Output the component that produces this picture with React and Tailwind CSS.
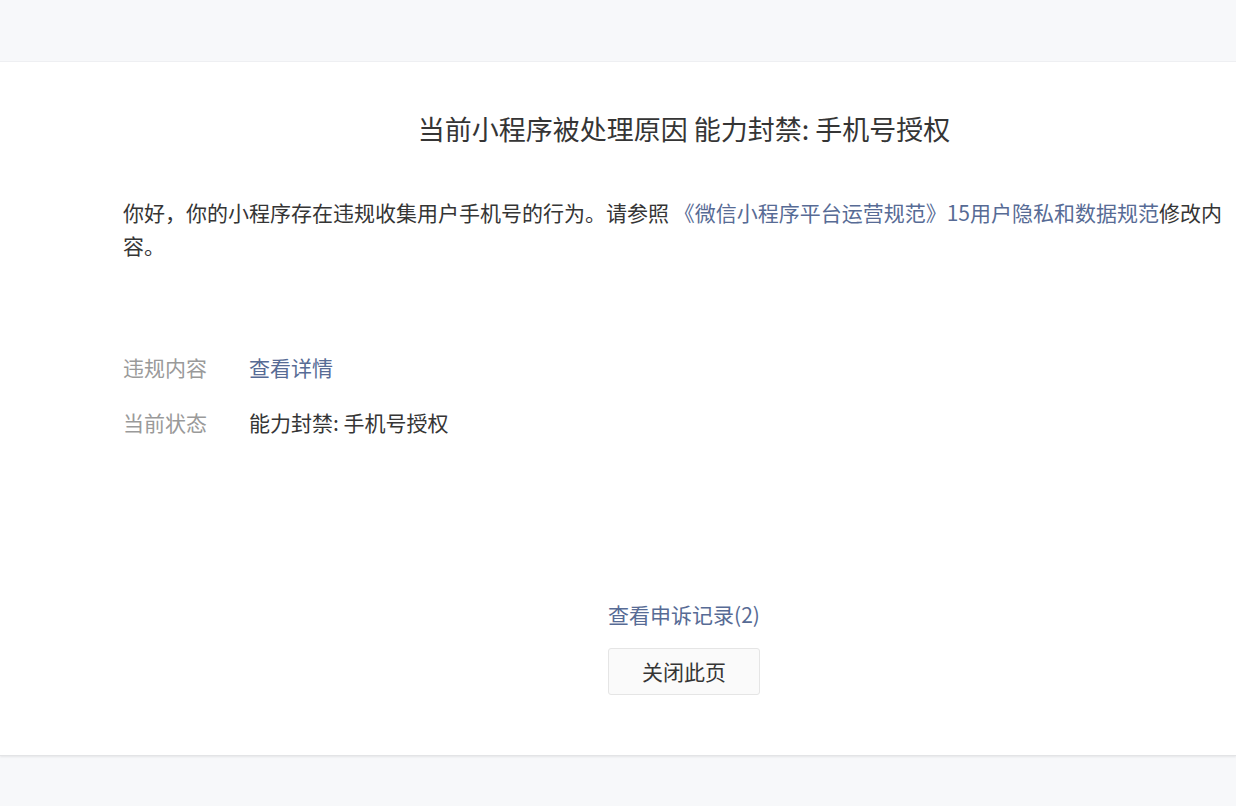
import React from "react";

const font = { fontFamily: '"Microsoft YaHei", "Noto Sans CJK SC", "Noto Sans", sans-serif' };

const App = () => {
  return (
    <div className="min-h-screen bg-[#f7f8fa] text-[#353535]" style={font}>
      <div className="h-[62px] border-b border-[#eff0f3]" />
      <div className="bg-white h-[694px] shadow-[0_1px_2px_rgba(0,0,0,0.08)] border-b border-[#e3e4e6]">
        <div className="w-[1122px] ml-[123px] pt-[47px]">
          <h1 className="text-center text-[27px] leading-[40px] font-normal">
            当前小程序被处理原因 能力封禁: 手机号授权
          </h1>
          <p className="mt-[47px] text-[21px] leading-[33px]">
            你好，你的小程序存在违规收集用户手机号的行为。请参照{" "}
            <a className="text-[#576b95]">《微信小程序平台运营规范》15用户隐私和数据规范</a>
            修改内容。
          </p>
          <div className="mt-[89px] flex flex-col gap-[22px] text-[21px] leading-[33px]">
            <div className="flex">
              <span className="w-[126px] text-[#9a9a9a]">违规内容</span>
              <a className="text-[#576b95]">查看详情</a>
            </div>
            <div className="flex">
              <span className="w-[126px] text-[#9a9a9a]">当前状态</span>
              <span>能力封禁: 手机号授权</span>
            </div>
          </div>
          <div className="mt-[159px] flex flex-col items-center">
            <a className="text-[21px] leading-[33px] text-[#576b95]">查看申诉记录(2)</a>
            <button className="mt-[17px] w-[152px] h-[47px] rounded-[3px] border border-[#e5e5e5] bg-[#fafafa] text-[21px] text-[#353535]">
              关闭此页
            </button>
          </div>
        </div>
      </div>
    </div>
  );
};

export default App;
